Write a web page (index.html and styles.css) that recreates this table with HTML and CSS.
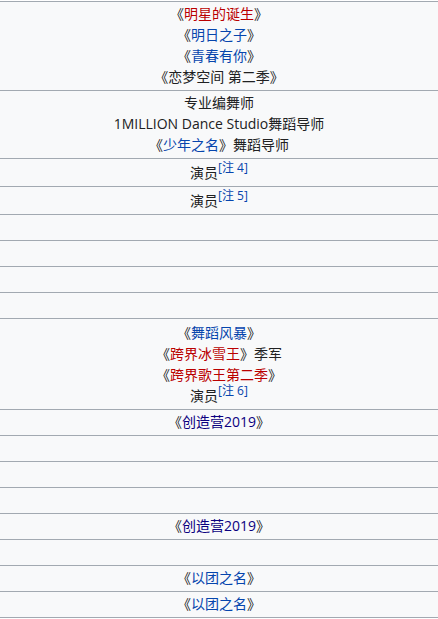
FILE: index.html
```html
<!DOCTYPE html>
<html lang="zh">
<head>
  <meta charset="UTF-8" />
  <meta name="viewport" content="width=device-width, initial-scale=1" />
  <title>作品</title>
  <link rel="stylesheet" href="styles.css">
</head>
<body>

  <div class="col">
    <div class="cell">
      《<a class="new" href="#">明星的诞生</a>》<br>
      《<a href="#">明日之子</a>》<br>
      《<a href="#">青春有你</a>》<br>
      《恋梦空间 第二季》
    </div>
    <div class="cell">
      专业编舞师<br>
      1MILLION Dance Studio舞蹈导师<br>
      《<a href="#">少年之名</a>》舞蹈导师
    </div>
    <div class="cell noted">演员<sup class="note"><a href="#">[注 4]</a></sup></div>
    <div class="cell noted">演员<sup class="note"><a href="#">[注 5]</a></sup></div>
    <div class="cell"></div>
    <div class="cell"></div>
    <div class="cell"></div>
    <div class="cell"></div>
    <div class="cell noted">
      《<a href="#">舞蹈风暴</a>》<br>
      《<a class="new" href="#">跨界冰雪王</a>》季军<br>
      《<a class="new" href="#">跨界歌王第二季</a>》<br>
      演员<sup class="note"><a href="#">[注 6]</a></sup>
    </div>
    <div class="cell">《<a class="visited" href="#">创造营2019</a>》</div>
    <div class="cell"></div>
    <div class="cell"></div>
    <div class="cell"></div>
    <div class="cell">《<a class="visited" href="#">创造营2019</a>》</div>
    <div class="cell"></div>
    <div class="cell">《<a href="#">以团之名</a>》</div>
    <div class="cell">《<a href="#">以团之名</a>》</div>
  </div>

</body>
</html>
```

FILE: styles.css
```css
body {
  margin: 0;
  padding-top: 1px;
  background: #fff;
  color: #202122;
  font-family: "Open Sans", "Noto Sans CJK SC", sans-serif;
  font-size: 14px;
  line-height: 21px;
}

a {
  color: #0645ad;
  text-decoration: none;
}

a.new {
  color: #ba0000;
}

a.visited {
  color: #0b0080;
}

.col {
  width: 438px;
  border-top: 1px solid #a2a9b1;
  background: #f8f9fa;
}

.cell {
  min-height: 21px;
  padding: 1px 4px 3px;
  text-align: center;
  border-bottom: 1px solid #a2a9b1;
}

.cell.noted {
  padding-top: 3px;
}

.note {
  font-size: 12px;
  line-height: 0;
  vertical-align: super;
}
```
